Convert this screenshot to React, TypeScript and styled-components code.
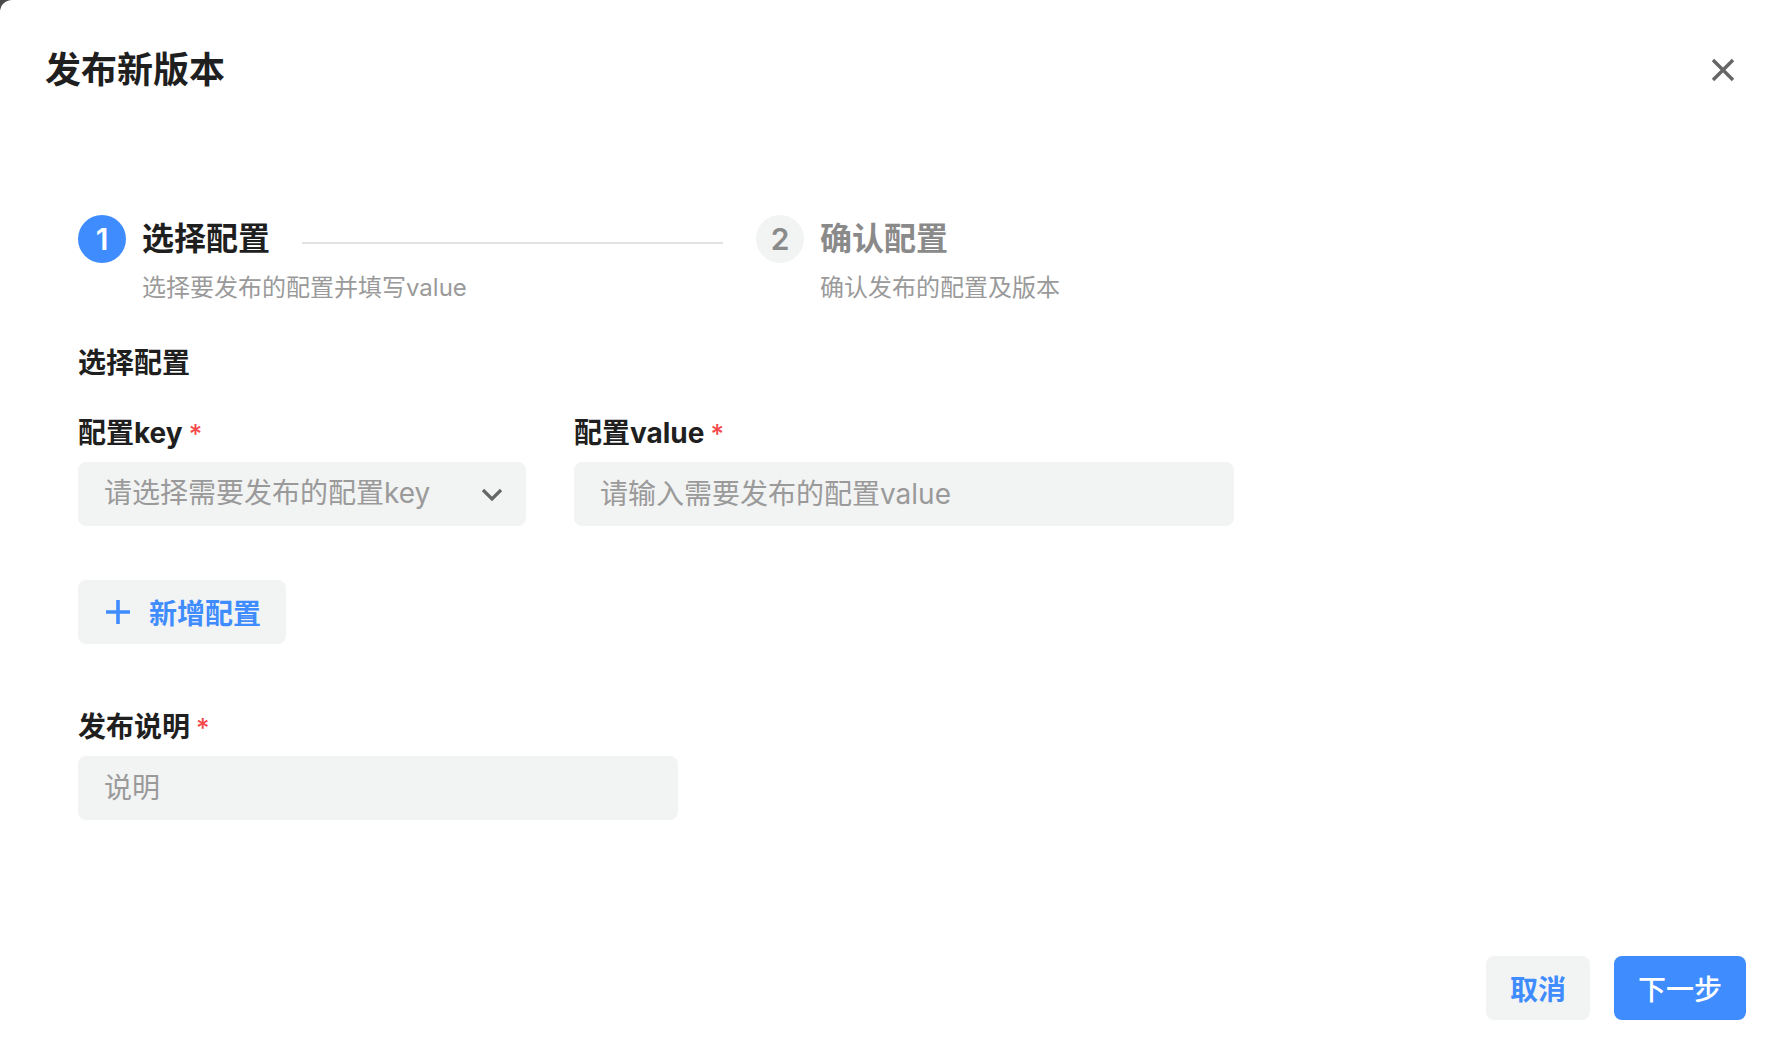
import styled, { createGlobalStyle } from "styled-components";

const GlobalStyle = createGlobalStyle`
  html, body {
    margin: 0;
    padding: 0;
    background: #4a4a4a;
  }

  body {
    font-family: Inter, "Noto Sans CJK SC", sans-serif;
    color: #1f1f1f;
  }

  * {
    box-sizing: border-box;
  }
`;

const steps = [
  { num: 1, title: "选择配置", desc: "选择要发布的配置并填写value" },
  { num: 2, title: "确认配置", desc: "确认发布的配置及版本" },
];

export default function App() {
  return (
    <>
      <GlobalStyle />
      <Dialog>
        <Header>
          <Title>发布新版本</Title>
          <CloseButton aria-label="关闭">
            <svg width="26" height="26" viewBox="0 0 26 26">
              <path
                d="M3 3 L23 23 M23 3 L3 23"
                stroke="currentColor"
                strokeWidth="3.4"
                fill="none"
              />
            </svg>
          </CloseButton>
        </Header>

        <Body>
          <Steps>
            {steps.map((step, index) => {
              const active = index === 0;
              const last = index === steps.length - 1;
              return (
                <StepItem key={step.num} $last={last}>
                  <StepCircle $active={active}>{step.num}</StepCircle>
                  <StepContent>
                    <StepTitleRow>
                      <StepTitle $active={active}>{step.title}</StepTitle>
                      {!last && <StepTail />}
                    </StepTitleRow>
                    <StepDesc>{step.desc}</StepDesc>
                  </StepContent>
                </StepItem>
              );
            })}
          </Steps>

          <SectionTitle>选择配置</SectionTitle>

          <FieldRow>
            <Field $width={448}>
              <Label>
                配置key<Required>*</Required>
              </Label>
              <SelectBox>
                <Placeholder>请选择需要发布的配置key</Placeholder>
                <svg width="24" height="24" viewBox="0 0 24 24">
                  <path
                    d="M3 8 L12 17 L21 8"
                    stroke="#666"
                    strokeWidth="3.2"
                    fill="none"
                  />
                </svg>
              </SelectBox>
            </Field>
            <Field $width={660}>
              <Label>
                配置value<Required>*</Required>
              </Label>
              <InputBox placeholder="请输入需要发布的配置value" />
            </Field>
          </FieldRow>

          <AddButton>
            <svg width="26" height="26" viewBox="0 0 26 26">
              <path
                d="M13 1 V25 M1 13 H25"
                stroke="currentColor"
                strokeWidth="3.6"
                fill="none"
              />
            </svg>
            新增配置
          </AddButton>

          <Field $width={600} $top={63}>
            <Label>
              发布说明<Required>*</Required>
            </Label>
            <InputBox placeholder="说明" />
          </Field>
        </Body>

        <Footer>
          <Button>取消</Button>
          <Button $primary>下一步</Button>
        </Footer>
      </Dialog>
    </>
  );
}

const Dialog = styled.div`
  width: 100%;
  height: 100vh;
  background: #fff;
  border-top-left-radius: 12px;
  display: flex;
  flex-direction: column;
`;

const Header = styled.div`
  display: flex;
  align-items: center;
  justify-content: space-between;
  padding: 45px 44px 0 45px;
`;

const Title = styled.h1`
  margin: 0;
  font-size: 36px;
  line-height: 50px;
  font-weight: 600;
  color: #1f1f1f;
`;

const CloseButton = styled.button`
  border: none;
  background: none;
  padding: 0;
  color: #666;
  display: flex;
  cursor: pointer;
`;

const Body = styled.div`
  padding: 120px 78px 0;
  display: flex;
  flex-direction: column;
  align-items: flex-start;
`;

const Steps = styled.div`
  display: flex;
  width: 100%;
`;

const StepItem = styled.div<{ $last: boolean }>`
  display: flex;
  align-items: flex-start;
  gap: 16px;
  flex: ${(p) => (p.$last ? "1" : "0 0 678px")};
`;

const StepCircle = styled.div<{ $active: boolean }>`
  flex: none;
  width: 48px;
  height: 48px;
  border-radius: 50%;
  display: flex;
  align-items: center;
  justify-content: center;
  font-size: 30px;
  font-weight: 600;
  background: ${(p) => (p.$active ? "#3f8cff" : "#f2f3f3")};
  color: ${(p) => (p.$active ? "#fff" : "#8a8a8a")};
`;

const StepContent = styled.div`
  flex: 1;
  display: flex;
  flex-direction: column;
`;

const StepTitleRow = styled.div`
  display: flex;
  align-items: center;
  height: 48px;
`;

const StepTitle = styled.div<{ $active: boolean }>`
  font-size: 32px;
  line-height: 48px;
  font-weight: 700;
  color: ${(p) => (p.$active ? "#1f1f1f" : "#8a8a8a")};
`;

const StepTail = styled.div`
  flex: 1;
  height: 2px;
  margin: 8px 33px 0 32px;
  background: #e3e3e3;
`;

const StepDesc = styled.div`
  margin-top: 8px;
  font-size: 24px;
  line-height: 34px;
  color: #9a9a9a;
`;

const SectionTitle = styled.h2`
  margin: 38px 0 0;
  font-size: 28px;
  line-height: 40px;
  font-weight: 700;
  color: #1f1f1f;
`;

const FieldRow = styled.div`
  display: flex;
  gap: 48px;
  margin-top: 30px;
`;

const Field = styled.div<{ $width: number; $top?: number }>`
  display: flex;
  flex-direction: column;
  width: ${(p) => p.$width}px;
  margin-top: ${(p) => p.$top ?? 0}px;
`;

const Label = styled.label`
  font-size: 28px;
  line-height: 40px;
  font-weight: 700;
  color: #1f1f1f;
  margin-bottom: 8px;
`;

const Required = styled.span`
  color: #f5484a;
  font-size: 26px;
  font-weight: 500;
  margin-left: 6px;
`;

const SelectBox = styled.div`
  height: 64px;
  border-radius: 8px;
  background: #f2f3f3;
  display: flex;
  align-items: center;
  justify-content: space-between;
  padding: 0 22px 0 26px;
`;

const Placeholder = styled.span`
  font-size: 28px;
  line-height: 36px;
  color: #9a9a9a;
  margin-top: -3px;
`;

const InputBox = styled.input`
  height: 64px;
  border: none;
  outline: none;
  border-radius: 8px;
  background: #f2f3f3;
  padding: 0 26px;
  font-family: inherit;
  font-size: 28px;
  color: #1f1f1f;

  &::placeholder {
    color: #9a9a9a;
  }
`;

const AddButton = styled.button`
  margin-top: 54px;
  height: 64px;
  border: none;
  border-radius: 8px;
  background: #f2f3f3;
  color: #3f8cff;
  display: flex;
  align-items: center;
  gap: 18px;
  padding: 0 25px 0 27px;
  font-family: inherit;
  font-size: 28px;
  font-weight: 700;
  cursor: pointer;
`;

const Footer = styled.div`
  margin-top: auto;
  display: flex;
  justify-content: flex-end;
  gap: 24px;
  padding: 0 34px 36px;
`;

const Button = styled.button<{ $primary?: boolean }>`
  height: 64px;
  border: none;
  border-radius: 8px;
  padding: 0 24px;
  font-family: inherit;
  font-size: 28px;
  font-weight: ${(p) => (p.$primary ? 500 : 700)};
  background: ${(p) => (p.$primary ? "#3f8cff" : "#f2f3f3")};
  color: ${(p) => (p.$primary ? "#fff" : "#3f8cff")};
  cursor: pointer;
`;
